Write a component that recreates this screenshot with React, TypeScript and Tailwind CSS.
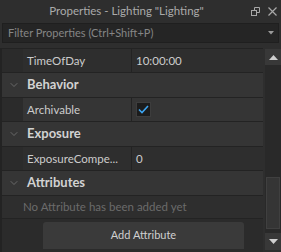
import { ChevronDown } from 'lucide-react'

const font = { fontFamily: '"Lato", "Noto Sans", sans-serif' }

function PropRow({ name, value, h, hover }: { name: string; value: React.ReactNode; h: string; hover?: boolean }) {
  return (
    <div className={`flex border-b border-[#232323] ${h} ${hover ? 'bg-[#353535]' : 'bg-[#2e2e2e]'}`}>
      <div className="w-[21px] shrink-0 bg-[#2b2b2b]" />
      <div className="w-[109px] shrink-0 border-r border-[#232323] flex items-center pl-[4px] pr-[3px] text-[11.5px] text-[#cccccc] min-w-0">
        <span className="whitespace-nowrap">{name}</span>
      </div>
      <div className="flex-1 flex items-center pl-[4px] text-[11.5px] text-[#cccccc]">{value}</div>
    </div>
  )
}

function Header({ title, h }: { title: string; h: string }) {
  return (
    <div className={`flex items-center border-b border-[#232323] bg-[#353535] ${h}`}>
      <ChevronDown size={12} strokeWidth={1.5} className="ml-[6px] text-[#7a7a7a]" />
      <span className="ml-[7px] text-[13px] font-bold text-[#d2d2d2]">{title}</span>
    </div>
  )
}

export default function App() {
  return (
    <div className="w-[281px] h-[252px] bg-[#2e2e2e] flex flex-col overflow-hidden" style={font}>
      <div className="h-[22px] flex items-center shrink-0">
        <div className="flex-1 text-center text-[11.5px] text-[#aaaaaa] pl-[2px]">Properties - Lighting "Lighting"</div>
        <div className="flex items-center gap-[8px] pr-[4px]">
          <svg width="9" height="9" viewBox="0 0 9 9" fill="none" stroke="#a8a8a8" strokeWidth="1">
            <rect x="0.5" y="3.5" width="5" height="5" />
            <path d="M3.5 3.5V0.5H8.5V5.5H5.5" />
          </svg>
          <svg width="9" height="9" viewBox="0 0 9 9" fill="none" stroke="#a8a8a8" strokeWidth="1.2">
            <path d="M0.5 0.5L8.5 8.5M8.5 0.5L0.5 8.5" />
          </svg>
        </div>
      </div>
      <div className="mt-[1px] mx-[2px] h-[20px] shrink-0 bg-[#252525] border border-[#1f1f1f] flex items-center justify-between pl-[5px] pr-[4px]">
        <span className="text-[11px] text-[#858585]">Filter Properties (Ctrl+Shift+P)</span>
        <svg width="6" height="4" viewBox="0 0 6 4"><path d="M0 0H6L3 3.5Z" fill="#9a9a9a" /></svg>
      </div>
      <div className="h-[5px] shrink-0" />
      <div className="flex-1 flex">
        <div className="w-[263px] flex flex-col border-l-2 border-[#232323]">
          <div className="border-t border-[#232323]" />
          <PropRow name="TimeOfDay" value="10:00:00" h="h-[24px]" />
          <Header title="Behavior" h="h-[25px]" />
          <PropRow
            name="Archivable"
            h="h-[24px]"
            hover
            value={
              <span className="w-[15px] h-[15px] bg-[#1c1c1c] border border-[#3d3d3d] flex items-center justify-center">
                <svg width="11" height="9" viewBox="0 0 11 9" fill="none" stroke="#3ea6f2" strokeWidth="1.6">
                  <path d="M1 4.5L4 7.5L10 1" />
                </svg>
              </span>
            }
          />
          <Header title="Exposure" h="h-[25px]" />
          <PropRow name="ExposureCompe..." value="0" h="h-[24px]" />
          <Header title="Attributes" h="h-[25px]" />
          <div className="h-[23px] border-b border-[#232323] flex items-center pl-[21px] text-[11.5px] text-[#6b6b6b]">
            No Attribute has been added yet
          </div>
          <div className="flex-1 bg-[#2b2b2b] pt-[3px] pl-[41px] pr-[19px]">
            <div className="h-[27px] bg-[#3a3a3a] rounded-t-[3px] flex items-center justify-center text-[11px] text-[#d0d0d0]">
              Add Attribute
            </div>
          </div>
        </div>
        <div className="w-[16px] ml-[2px] flex flex-col pt-[1px] pb-[2px]">
          <div className="h-[16px] bg-[#383838] flex items-center justify-center">
            <svg width="9" height="5" viewBox="0 0 9 5"><path d="M0 5H9L4.5 0Z" fill="#cfcfcf" /></svg>
          </div>
          <div className="flex-1 bg-[#292929] flex flex-col justify-end pb-[4px]">
            <div className="h-[52px] mx-[1px] bg-[#353535] border border-[#404040]" />
          </div>
          <div className="h-[17px] bg-[#383838] flex items-center justify-center">
            <svg width="9" height="5" viewBox="0 0 9 5"><path d="M0 0H9L4.5 5Z" fill="#cfcfcf" /></svg>
          </div>
        </div>
      </div>
    </div>
  )
}
